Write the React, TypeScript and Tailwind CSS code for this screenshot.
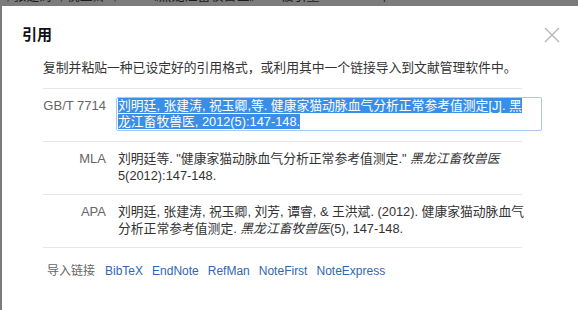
import React from "react";

const font = { fontFamily: '"Liberation Sans", Arial, "Noto Sans CJK SC", sans-serif' };

function Row({ label, children, last }: { label: string; children: React.ReactNode; last?: boolean }) {
    return (
        <div className={"flex gap-[12px] pt-[8px] pb-[10px] " + (last ? "" : "border-b border-[#e6e6e6] w-[479px]")}>
            <div className="w-[63px] shrink-0 text-right text-[13px] text-[#666] leading-[17px]">{label}</div>
            <div className="w-[414px] shrink-0 text-[12.8px] text-[#333] leading-[17px]">{children}</div>
        </div>
    );
}

export default function App() {
    return (
        <div className="w-[578px] h-[310px] bg-[#7c7c7c] overflow-hidden flex flex-col text-[13px]" style={font}>
            <div className="h-[6px] overflow-hidden shrink-0">
                <div className="-mt-[12px] pl-[6px] whitespace-nowrap text-[13px] leading-[16px] text-[#1a1a1a]">
                    ; 张建涛&nbsp;&nbsp;; 祝玉卿&nbsp;&nbsp;; ...&nbsp;&nbsp;&nbsp;&nbsp;《黑龙江畜牧兽医》&nbsp;&nbsp;&nbsp;&nbsp;&nbsp;被引量: 3&nbsp;&nbsp;&nbsp;&nbsp;2012年
                </div>
            </div>
            <div className="flex-1 ml-[2px] bg-white flex flex-col">
                <div className="flex items-center justify-between pl-[20px] pr-[18px] pt-[19px]">
                    <div className="text-[15px] font-bold text-[#111] leading-[20px]">引用</div>
                    <svg width="16" height="16" viewBox="0 0 16 16">
                        <path d="M1 1 L15 15 M15 1 L1 15" stroke="#b4b4b4" strokeWidth="1.2" fill="none" />
                    </svg>
                </div>
                <div className="pl-[41px] pt-[14px]">
                    <div className="text-[#333] text-[12.8px] whitespace-nowrap leading-[17px] pb-[12px] border-b border-[#e6e6e6] w-[479px]">
                        复制并粘贴一种已设定好的引用格式，或利用其中一个链接导入到文献管理软件中。
                    </div>
                    <Row label="GB/T 7714">
                        <div className="border border-[#a9c8ee] w-[426px] -ml-[2px] pl-[1px] rounded-[2px] leading-[16px]">
                            <div className="w-[414px]">
                                <span className="bg-[#3a8ee6] text-white">
                                    刘明廷, 张建涛, 祝玉卿,等. 健康家猫动脉血气分析正常参考值测定[J]. 黑龙江畜牧兽医, 2012(5):147-148.
                                </span>
                            </div>
                        </div>
                    </Row>
                    <Row label="MLA">
                        刘明廷等. "健康家猫动脉血气分析正常参考值测定." <i>黑龙江畜牧兽医</i> 5(2012):147-148.
                    </Row>
                    <Row label="APA">
                        刘明廷, 张建涛, 祝玉卿, 刘芳, 谭睿, &amp; 王洪斌. (2012). 健康家猫动脉血气分析正常参考值测定. <i>黑龙江畜牧兽医</i>(5), 147-148.
                    </Row>
                    <div className="flex items-center gap-[9px] pt-[15px] pl-[7px] text-[12px] leading-[16px]">
                        <span className="text-[#666] mr-[1px] -ml-[3px]">导入链接</span>
                        <a className="text-[#3366b0]">BibTeX</a>
                        <a className="text-[#3366b0]">EndNote</a>
                        <a className="text-[#3366b0]">RefMan</a>
                        <a className="text-[#3366b0]">NoteFirst</a>
                        <a className="text-[#3366b0]">NoteExpress</a>
                    </div>
                </div>
            </div>
        </div>
    );
}
